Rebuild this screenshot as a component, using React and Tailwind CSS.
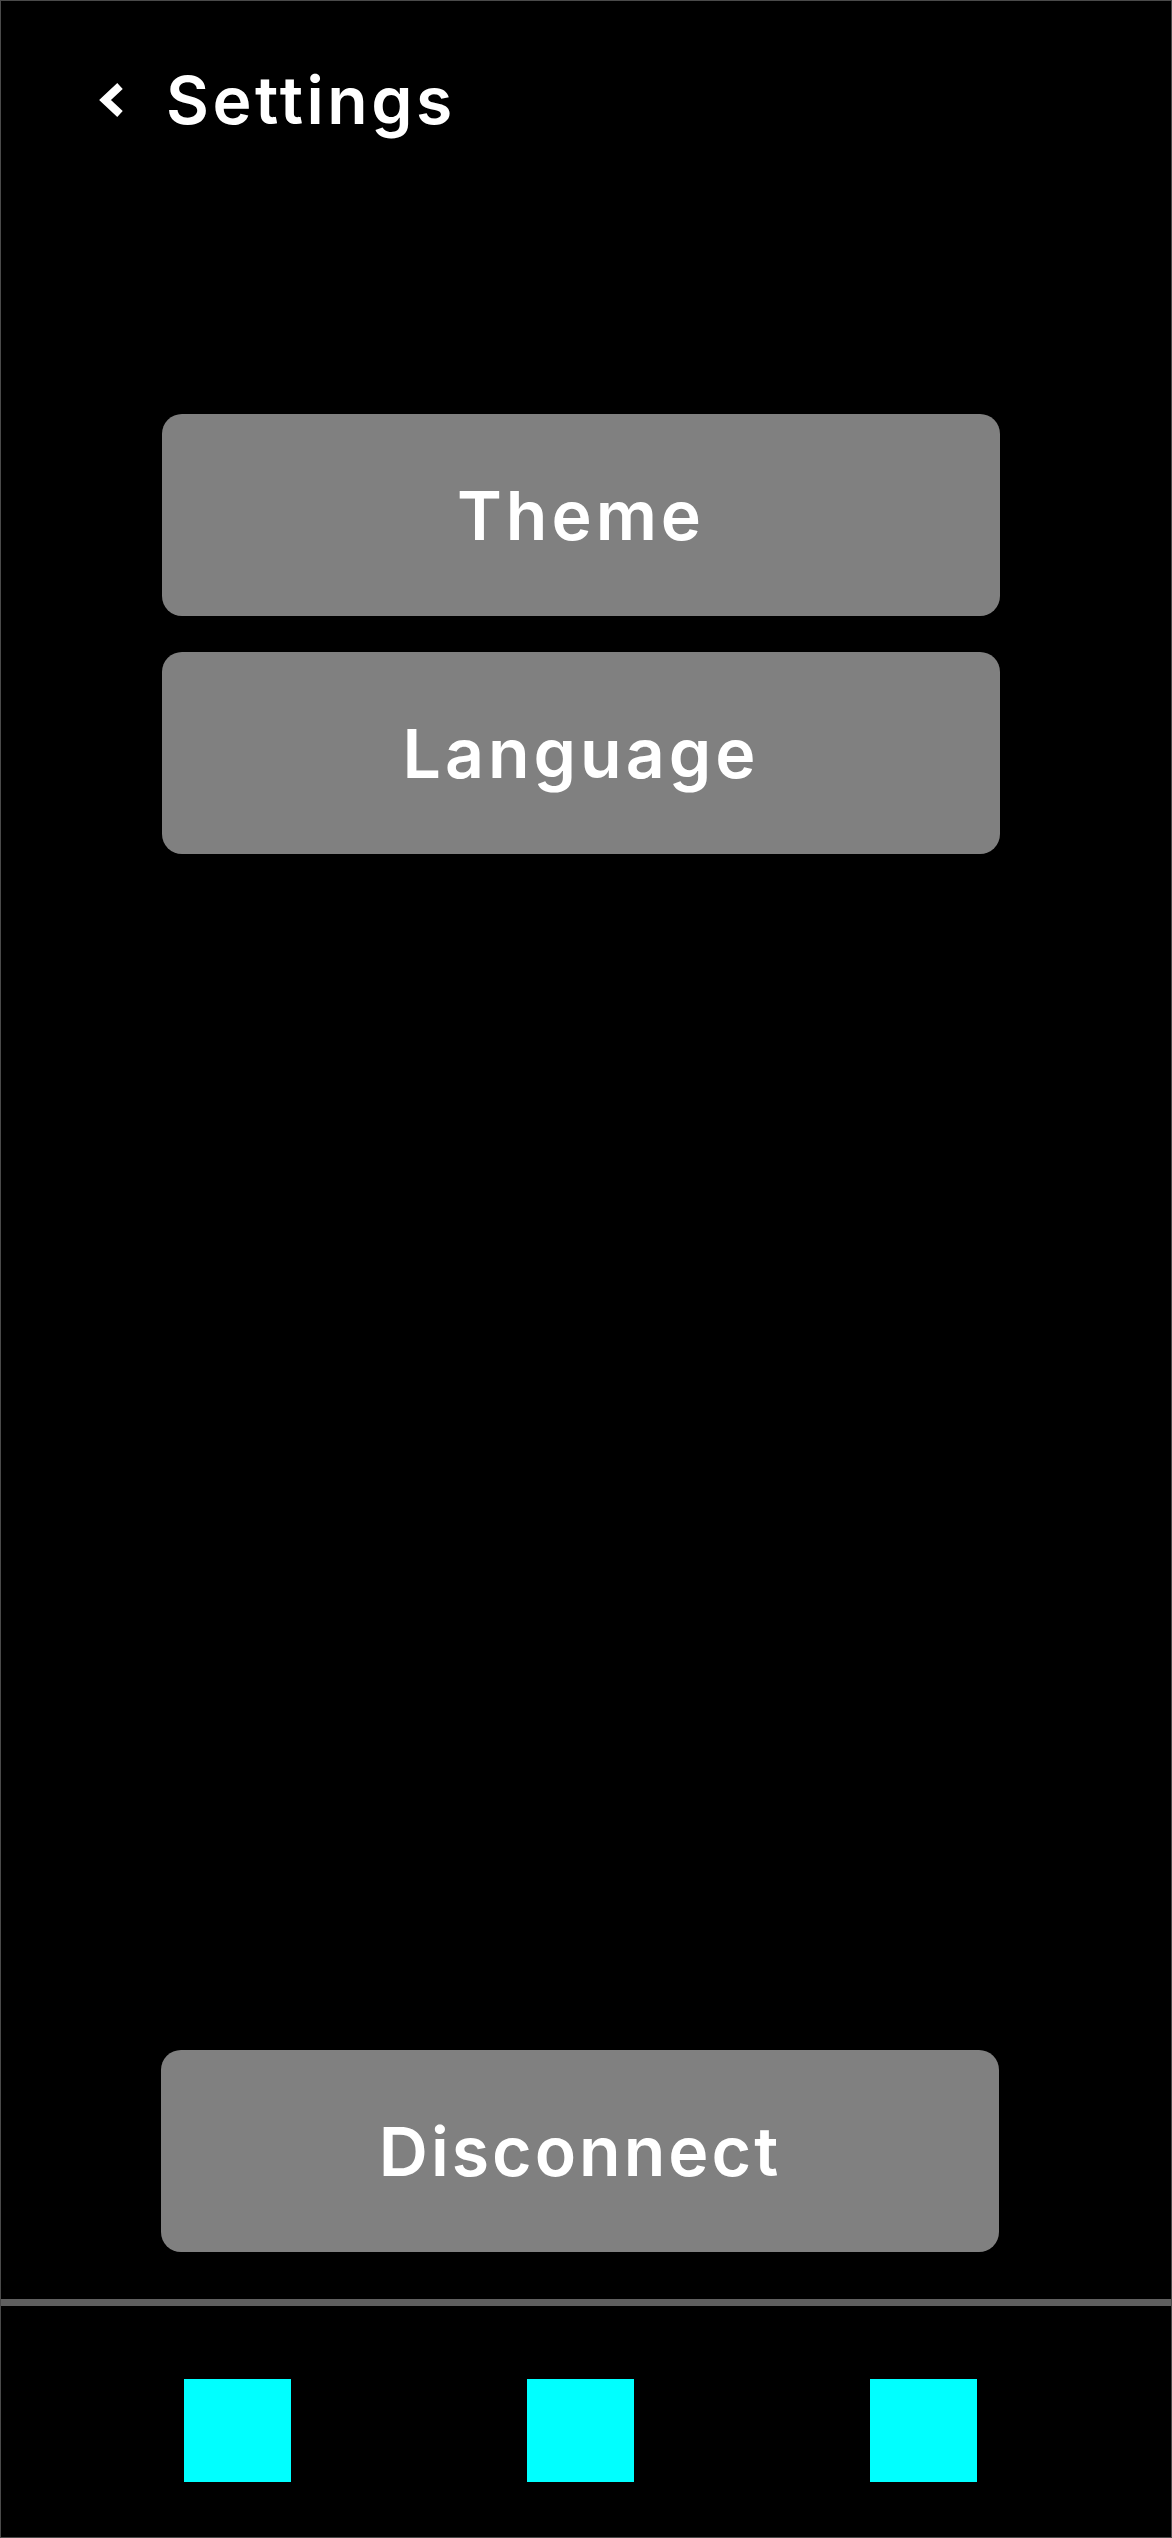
export default function App() {
  const items = ['Theme', 'Language'];

  return (
    <div
      className="w-[1172px] h-[2538px] bg-black text-white border border-[#4a4a4a] flex flex-col"
      style={{ fontFamily: 'Inter, "Noto Sans", sans-serif' }}
    >
      {/* Header */}
      <div className="flex items-center h-[74px] mt-[62px] pl-[97px]">
        <svg className="w-[28px] h-[34px]" viewBox="0 0 28 34" fill="none">
          <path d="M22 3 L7 17 L22 31" stroke="white" strokeWidth="8" strokeLinejoin="miter" />
        </svg>
        <span className="ml-[40px] text-[66px] font-semibold leading-none tracking-[3.5px]">Settings</span>
      </div>

      {/* Menu */}
      <div className="flex flex-col gap-[36px] mt-[277px] ml-[161px] w-[838px]">
        {items.map((label) => (
          <button
            key={label}
            className="h-[202px] rounded-[20px] bg-[#808080] text-white text-[68px] font-semibold tracking-[4px]"
          >
            {label}
          </button>
        ))}
      </div>

      <div className="flex-1" />

      <div className="ml-[160px] w-[838px]">
        <button className="w-full h-[202px] rounded-[20px] bg-[#808080] text-white text-[68px] font-semibold tracking-[3px]">
          Disconnect
        </button>
      </div>

      {/* Bottom nav */}
      <div className="mt-[47px] h-[7px] bg-[#5f5f5f]" />
      <div className="h-[231px] flex items-start pt-[73px] pl-[183px] gap-[236px]">
        <div className="w-[107px] h-[103px] bg-[#00ffff]" />
        <div className="w-[107px] h-[103px] bg-[#00ffff]" />
        <div className="w-[107px] h-[103px] bg-[#00ffff]" />
      </div>
    </div>
  );
}
